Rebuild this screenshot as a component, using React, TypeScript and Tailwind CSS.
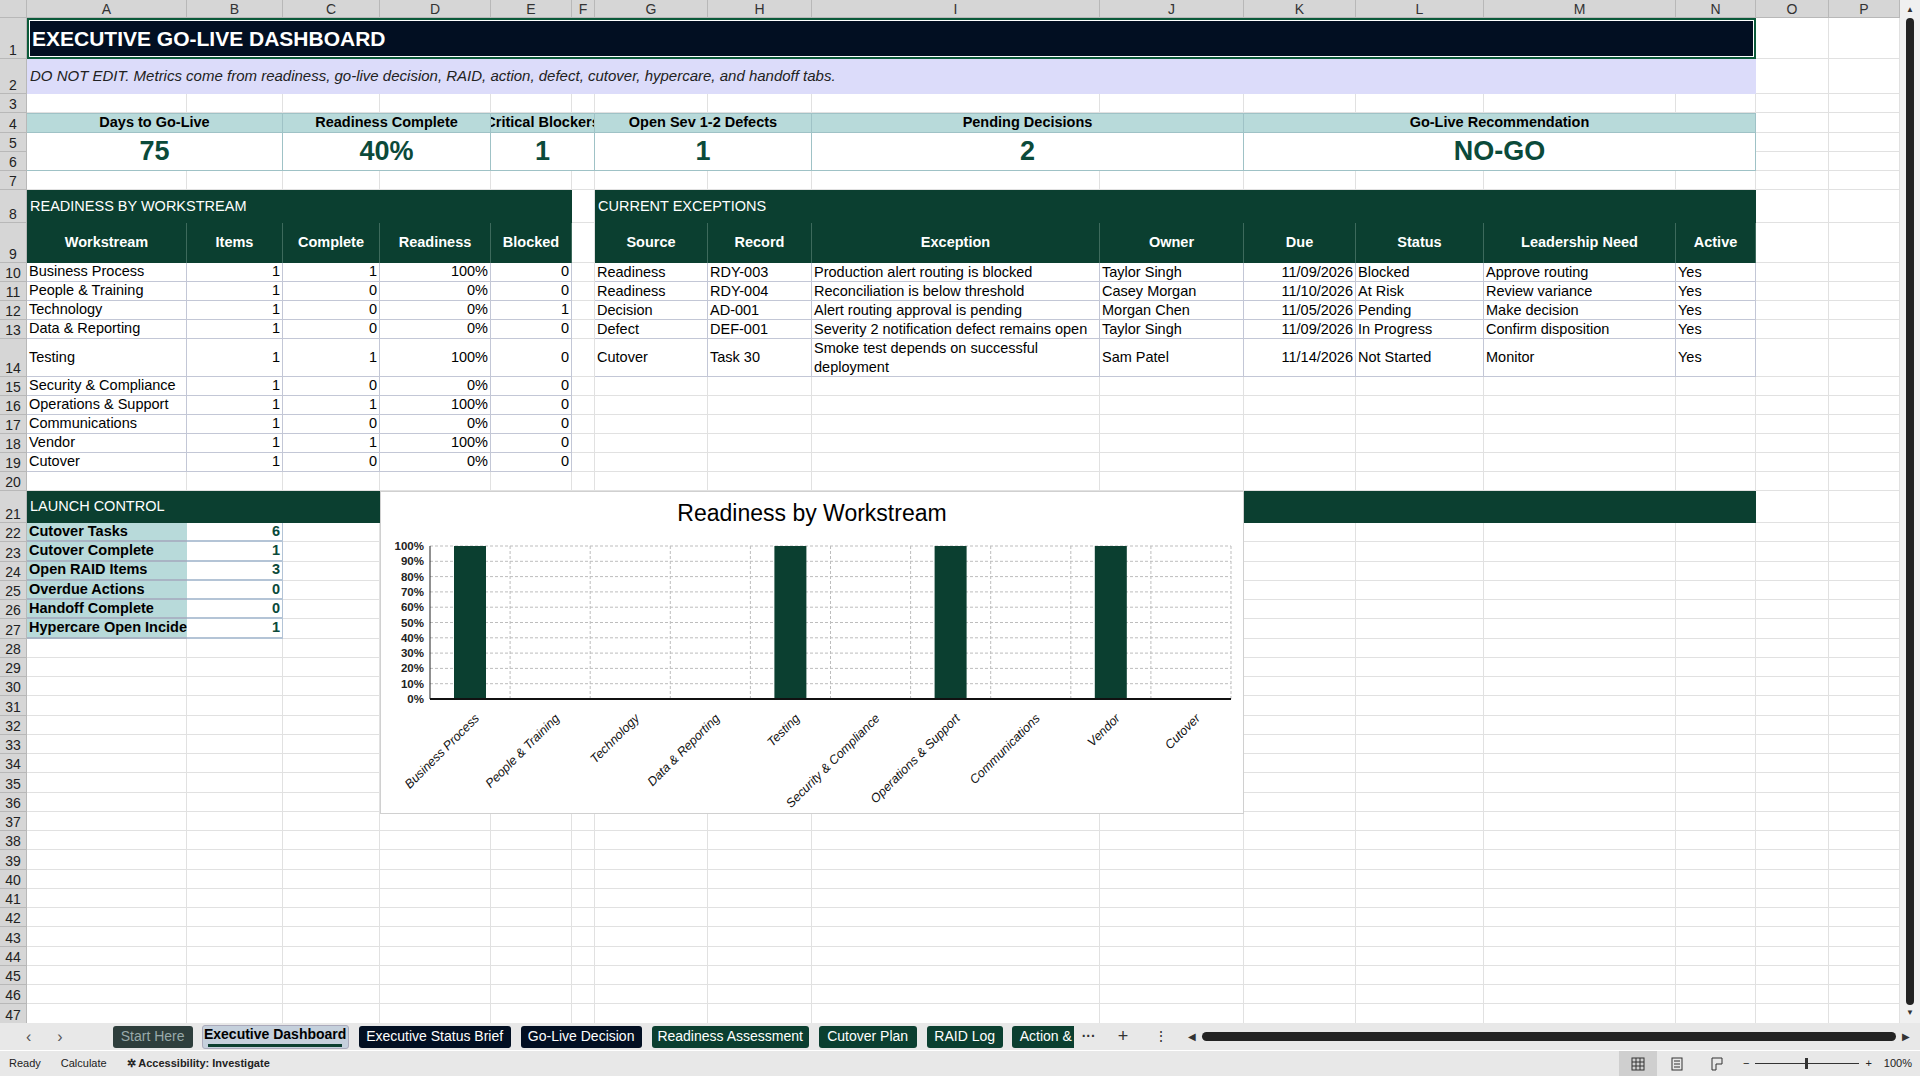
import React from 'react';

const COLS = ['A', 'B', 'C', 'D', 'E', 'F', 'G', 'H', 'I', 'J', 'K', 'L', 'M', 'N', 'O', 'P'];

const gridCols = 'grid-cols-[27px_160px_96px_97px_111px_81px_23px_113px_104px_288px_144px_112px_128px_192px_80px_73px_71px]';
const gridRows =
  'grid-rows-[18px_41px_35px_19px_20px_19px_19px_19px_33px_40px_19px_19px_19px_19px_38px_19px_19px_19px_19px_19px_19px_32px_repeat(26,19.25px)]';

const workstreams: [string, number, number, string, number][] = [
  ['Business Process', 1, 1, '100%', 0],
  ['People & Training', 1, 0, '0%', 0],
  ['Technology', 1, 0, '0%', 1],
  ['Data & Reporting', 1, 0, '0%', 0],
  ['Testing', 1, 1, '100%', 0],
  ['Security & Compliance', 1, 0, '0%', 0],
  ['Operations & Support', 1, 1, '100%', 0],
  ['Communications', 1, 0, '0%', 0],
  ['Vendor', 1, 1, '100%', 0],
  ['Cutover', 1, 0, '0%', 0],
];

const exceptions = [
  ['Readiness', 'RDY-003', 'Production alert routing is blocked', 'Taylor Singh', '11/09/2026', 'Blocked', 'Approve routing', 'Yes'],
  ['Readiness', 'RDY-004', 'Reconciliation is below threshold', 'Casey Morgan', '11/10/2026', 'At Risk', 'Review variance', 'Yes'],
  ['Decision', 'AD-001', 'Alert routing approval is pending', 'Morgan Chen', '11/05/2026', 'Pending', 'Make decision', 'Yes'],
  ['Defect', 'DEF-001', 'Severity 2 notification defect remains open', 'Taylor Singh', '11/09/2026', 'In Progress', 'Confirm disposition', 'Yes'],
  ['Cutover', 'Task 30', 'Smoke test depends on successful deployment', 'Sam Patel', '11/14/2026', 'Not Started', 'Monitor', 'Yes'],
];

const launch: [string, number][] = [
  ['Cutover Tasks', 6],
  ['Cutover Complete', 1],
  ['Open RAID Items', 3],
  ['Overdue Actions', 0],
  ['Handoff Complete', 0],
  ['Hypercare Open Incidents', 1],
];

const kpiRowStart = ['row-start-[11]', 'row-start-[12]', 'row-start-[13]', 'row-start-[14]', 'row-start-[15]', 'row-start-[16]', 'row-start-[17]', 'row-start-[18]', 'row-start-[19]', 'row-start-[20]'];
const excRowStart = ['row-start-[11]', 'row-start-[12]', 'row-start-[13]', 'row-start-[14]', 'row-start-[15]'];
const launchRowStart = ['row-start-[23]', 'row-start-[24]', 'row-start-[25]', 'row-start-[26]', 'row-start-[27]', 'row-start-[28]'];
const wsCols = ['col-start-2', 'col-start-3', 'col-start-4', 'col-start-5', 'col-start-6'];
const exCols = ['col-start-8', 'col-start-9', 'col-start-10', 'col-start-11', 'col-start-12', 'col-start-13', 'col-start-14', 'col-start-15'];

const cellLine = 'border-r border-b border-[#c3c7d6]';

function Filler() {
  const cells: React.ReactNode[] = [];
  cells.push(<div key="corner" className="bg-[#d6d6d6] border-r border-b border-[#b8b8b8]" />);
  COLS.forEach((c) => (
    cells.push(
      <div key={c} className="bg-[#d6d6d6] border-r border-b border-[#b8b8b8] text-[14px] text-[#333] flex items-end justify-center leading-none pb-[1px]">
        {c}
      </div>,
    )
  ));
  for (let r = 1; r <= 47; r++) {
    cells.push(
      <div key={'r' + r} className="bg-[#d6d6d6] border-r border-b border-[#b8b8b8] text-[14px] text-[#222] flex items-end justify-center leading-none pb-[1px]">
        {r}
      </div>,
    );
    COLS.forEach((c) => cells.push(<div key={c + r} className="border-r border-b border-[#e1e1e1]" />));
  }
  return <div className={`grid ${gridCols} ${gridRows}`}>{cells}</div>;
}

function Chart() {
  const cats = workstreams.map((w) => w[0]);
  const vals = workstreams.map((w) => (w[3] === '100%' ? 1 : 0));
  const x0 = 49, x1 = 850, yTop = 54, yBot = 207;
  const cw = (x1 - x0) / 10;
  return (
    <div className="absolute left-[380px] top-[491px] w-[864px] h-[323px] bg-white border border-[#d0d0d0]">
      <div className="text-center text-[23px] text-black mt-[10px] leading-none">Readiness by Workstream</div>
      <svg className="absolute left-0 top-0" width="864" height="323">
        {Array.from({ length: 11 }).map((_, i) => {
          const y = yBot - ((yBot - yTop) * i) / 10;
          return (
            <g key={i}>
              {i > 0 && <line x1={x0} x2={x1} y1={y} y2={y} stroke="#bdbdbd" strokeDasharray="3 2" />}
              <text x={x0 - 6} y={y + 4} fontSize="11.5" fontWeight="bold" textAnchor="end" fill="#222" fontFamily="Liberation Sans, sans-serif">
                {i * 10}%
              </text>
            </g>
          );
        })}
        {Array.from({ length: 10 }).map((_, i) => (
          <line key={i} x1={x0 + cw * (i + 1)} x2={x0 + cw * (i + 1)} y1={yTop} y2={yBot} stroke="#bdbdbd" strokeDasharray="3 2" />
        ))}
        {vals.map((v, i) =>
          v ? <rect key={i} x={x0 + cw * i + 24} y={yTop} width={32} height={yBot - yTop} fill="#0b3f30" /> : null,
        )}
        <line x1={x0} x2={x0} y1={yTop} y2={yBot} stroke="#222" />
        <line x1={x0} x2={x1} y1={yBot} y2={yBot} stroke="#111" strokeWidth="2" />
        {cats.map((c, i) => (
          <text
            key={c}
            x={x0 + cw * i + 50}
            y={yBot + 20}
            fontSize="12.5"
            fontStyle="italic"
            textAnchor="end"
            fill="#111"
            fontFamily="Liberation Sans, sans-serif"
            transform={`rotate(-45 ${x0 + cw * i + 50} ${yBot + 20})`}
          >
            {c}
          </text>
        ))}
      </svg>
    </div>
  );
}

function Content() {
  const hdr = 'bg-[#0b3f30] text-white text-[14.5px] font-bold';
  return (
    <div className={`absolute inset-0 grid ${gridCols} ${gridRows} text-[14.5px] text-black`}>
      <div className="col-start-2 col-end-16 row-start-2 bg-[#020f22] border-2 border-[#0b5a3a] outline outline-1 outline-white -outline-offset-3 text-white font-bold text-[21px] flex items-center px-[3px]">
        EXECUTIVE GO-LIVE DASHBOARD
      </div>
      <div className="col-start-2 col-end-16 row-start-3 bg-[#dcdcfa] italic text-[15px] text-[#222] flex items-center px-[3px]">
        DO NOT EDIT. Metrics come from readiness, go-live decision, RAID, action, defect, cutover, hypercare, and handoff tabs.
      </div>

      {[
        ['col-start-2 col-end-4', 'Days to Go-Live', '75'],
        ['col-start-4 col-end-6', 'Readiness Complete', '40%'],
        ['col-start-6 col-end-8', 'Critical Blockers', '1'],
        ['col-start-8 col-end-10', 'Open Sev 1-2 Defects', '1'],
        ['col-start-10 col-end-12', 'Pending Decisions', '2'],
        ['col-start-12 col-end-16', 'Go-Live Recommendation', 'NO-GO'],
      ].map(([pos, label, val]) => (
        <React.Fragment key={label}>
          <div className={`${pos} row-start-5 bg-[#b8dada] border-r border-b border-t border-[#9fc2c6] font-bold text-[14.5px] flex items-center justify-center overflow-hidden whitespace-nowrap`}>
            {label}
          </div>
          <div className={`${pos} row-start-6 row-span-2 bg-white border-r border-b border-[#9fc2c6] font-bold text-[27px] text-[#0b4a3a] flex items-center justify-center`}>
            {val}
          </div>
        </React.Fragment>
      ))}

      <div className={`col-start-2 col-end-7 row-start-9 ${hdr} font-normal flex items-center px-[3px]`}>READINESS BY WORKSTREAM</div>
      {['Workstream', 'Items', 'Complete', 'Readiness', 'Blocked'].map((h, i) => (
        <div key={h} className={`${wsCols[i]} row-start-10 ${hdr} border-r border-[#3d6a5c] flex items-center justify-center`}>{h}</div>
      ))}
      {workstreams.map((w, r) =>
        w.map((v, i) => (
          <div
            key={r + '-' + i}
            className={`${wsCols[i]} ${kpiRowStart[r]} bg-white ${cellLine} flex items-center px-[2px] whitespace-nowrap ${i === 0 ? '' : 'justify-end'}`}
          >
            {v}
          </div>
        )),
      )}

      <div className={`col-start-8 col-end-16 row-start-9 ${hdr} font-normal flex items-center px-[3px]`}>CURRENT EXCEPTIONS</div>
      {['Source', 'Record', 'Exception', 'Owner', 'Due', 'Status', 'Leadership Need', 'Active'].map((h, i) => (
        <div key={h} className={`${exCols[i]} row-start-10 ${hdr} border-r border-[#3d6a5c] flex items-center justify-center`}>{h}</div>
      ))}
      {exceptions.map((row, r) =>
        row.map((v, i) => (
          <div
            key={r + '-' + i}
            className={`${exCols[i]} ${excRowStart[r]} bg-white ${cellLine} flex items-center px-[2px] leading-[19px] overflow-hidden ${i === 4 ? 'justify-end' : ''} ${r === 4 && i === 2 ? '' : 'whitespace-nowrap'}`}
          >
            {v}
          </div>
        )),
      )}

      <div className={`col-start-2 col-end-5 row-start-22 ${hdr} font-normal flex items-center px-[3px]`}>LAUNCH CONTROL</div>
      <div className="col-start-12 col-end-16 row-start-22 bg-[#0b3f30]" />
      {launch.map(([l, v], r) => (
        <React.Fragment key={l}>
          <div className={`col-start-2 ${launchRowStart[r]} bg-[#b8dada] border-b-2 border-[#a9b4c4] font-bold text-[14.5px] flex items-center px-[2px] whitespace-nowrap overflow-hidden`}>
            {l}
          </div>
          <div className={`col-start-3 ${launchRowStart[r]} bg-white border-r border-b-2 border-[#b4c4d6] font-bold text-[#0b4a3a] flex items-center justify-end px-[2px]`}>
            {v}
          </div>
        </React.Fragment>
      ))}
    </div>
  );
}

function Tabs() {
  const tabs: [string, string][] = [
    ['Executive Status Brief', 'bg-[#020f22] w-[152px]'],
    ['Go-Live Decision', 'bg-[#020f22] w-[121px]'],
    ['Readiness Assessment', 'bg-[#0b3f30] w-[157px]'],
    ['Cutover Plan', 'bg-[#0b3f30] w-[98px]'],
    ['RAID Log', 'bg-[#0b3f30] w-[76px]'],
  ];
  return (
    <div className="h-[27px] bg-[#e8e8e8] flex items-center text-[14px] relative">
      <span className="ml-[26px] text-[#555] text-[16px]">‹</span>
      <span className="ml-[26px] text-[#555] text-[16px]">›</span>
      <div className="ml-[50px] w-[80px] h-[22px] bg-[#2e3e3c] text-[#9aa] rounded-[3px] flex items-center justify-center">Start Here</div>
      <div className="ml-[9px] w-[147px] h-[24px] bg-[#c5d0dc] text-black font-bold rounded-[3px] flex flex-col items-center justify-center border border-[#aab]">
        <span className="leading-none">Executive Dashboard</span>
        <span className="w-[134px] h-[3px] bg-[#0b3f30] mt-[3px]" />
      </div>
      {tabs.map(([t, c]) => (
        <div key={t} className={`ml-[10px] h-[22px] ${c} text-white rounded-[3px] flex items-center justify-center`}>{t}</div>
      ))}
      <div className="ml-[9px] w-[62px] h-[22px] bg-[#0b3f30] text-white rounded-l-[3px] flex items-center pl-[8px] overflow-hidden whitespace-nowrap">Action &amp;</div>
      <span className="ml-[8px] text-[#333] font-bold">···</span>
      <span className="ml-[22px] text-[#333] text-[18px]">+</span>
      <span className="ml-[26px] text-[#333]">⋮</span>
      <span className="ml-[20px] text-[#333] text-[10px]">◀</span>
      <div className="ml-[6px] w-[694px] h-[9px] rounded-full bg-[#222]" />
      <span className="ml-[6px] text-[#333] text-[10px]">▶</span>
    </div>
  );
}

function StatusBar() {
  return (
    <div className="h-[26px] bg-[#e8e8e8] flex items-center text-[11px] text-[#222] border-t border-white">
      <span className="ml-[9px]">Ready</span>
      <span className="ml-[20px]">Calculate</span>
      <span className="ml-[20px] font-bold">✲ Accessibility: Investigate</span>
      <div className="ml-auto flex items-center h-full">
        <div className="w-[38px] h-full bg-[#cfcfcf] flex items-center justify-center">
          <svg width="14" height="14" viewBox="0 0 14 14" fill="none" stroke="#333"><rect x="1" y="1" width="12" height="12" /><path d="M1 5h12M1 9h12M5 1v12M9 1v12" /></svg>
        </div>
        <div className="w-[40px] flex justify-center">
          <svg width="12" height="14" viewBox="0 0 12 14" fill="none" stroke="#333"><rect x="1" y="1" width="10" height="12" /><path d="M3 4h6M3 7h6M3 10h6" /></svg>
        </div>
        <div className="w-[40px] flex justify-center">
          <svg width="12" height="14" viewBox="0 0 12 14" fill="none" stroke="#333"><path d="M1 1h10v6H5v6H1z" /></svg>
        </div>
        <span className="ml-[6px]">−</span>
        <div className="mx-[6px] w-[104px] h-[1px] bg-[#333] relative">
          <div className="absolute left-[50px] -top-[5px] w-[3px] h-[11px] bg-[#333]" />
        </div>
        <span>+</span>
        <span className="ml-[12px] mr-[8px]">100%</span>
      </div>
    </div>
  );
}

export default function App() {
  return (
    <div className="w-[1920px] h-[1076px] overflow-hidden bg-white flex flex-col" style={{ fontFamily: '"Liberation Sans", Arial, sans-serif' }}>
      <div className="flex h-[1023px] overflow-hidden">
        <div className="relative w-[1900px] overflow-hidden">
          <Filler />
          <Content />
          <Chart />
        </div>
        <div className="w-[20px] bg-[#f0f0f0] flex flex-col items-center py-[4px]">
          <span className="text-[8px] text-[#333]">▲</span>
          <div className="w-[8px] flex-1 bg-[#222] rounded-full my-[2px]" />
          <span className="text-[8px] text-[#333]">▼</span>
        </div>
      </div>
      <Tabs />
      <StatusBar />
    </div>
  );
}
